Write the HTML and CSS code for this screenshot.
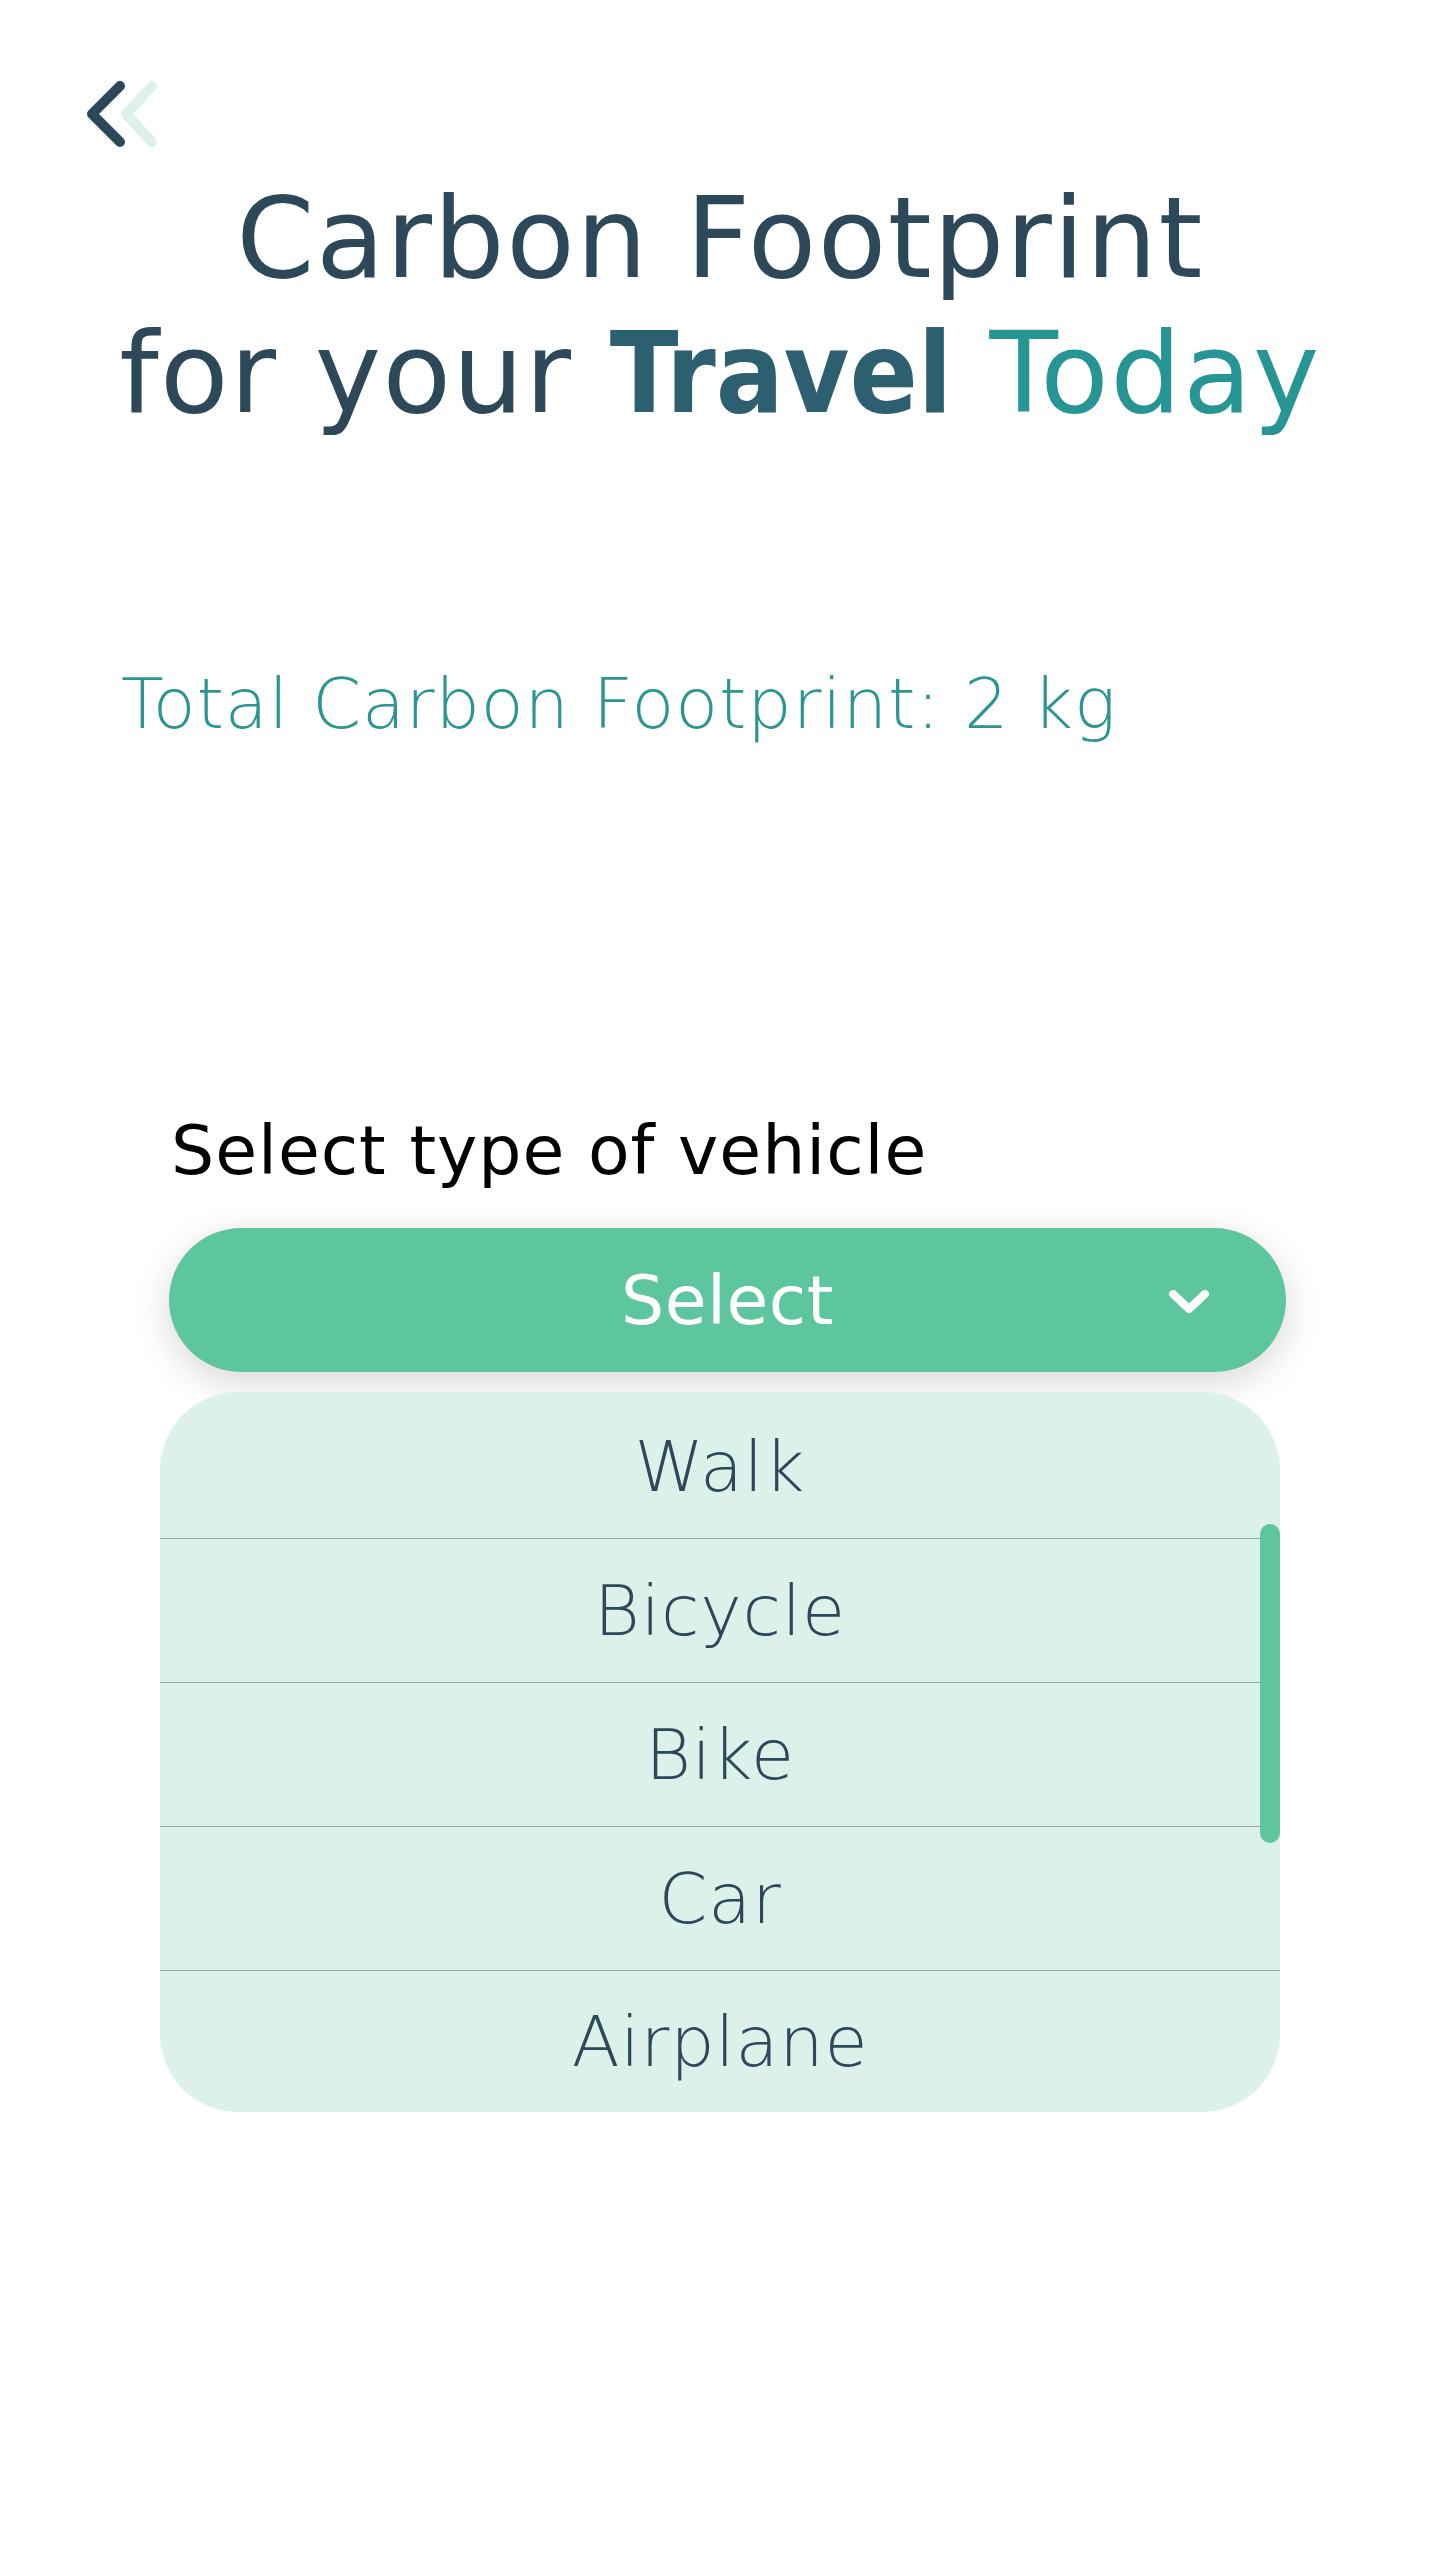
FILE: index.html
```html
<!DOCTYPE html>
<html lang="en">
<head>
<meta charset="utf-8">
<title>Carbon Footprint</title>
<link rel="stylesheet" href="styles.css">
</head>
<body>
<main class="page">
  <a class="back" href="#" aria-label="Back">
    <svg width="80" height="70" viewBox="0 0 80 70">
      <polyline points="72,8 46,36 72,64" fill="none" stroke="#dcf1ea" stroke-width="10" stroke-linecap="round" stroke-linejoin="round"/>
      <polyline points="40,8 12,36 40,64" fill="none" stroke="#2d4859" stroke-width="10" stroke-linecap="round" stroke-linejoin="round"/>
    </svg>
  </a>
  <h1 class="title">Carbon Footprint<br>for your <span class="travel">Travel</span> <span class="today">Today</span></h1>
  <p class="total">Total Carbon Footprint: 2 kg</p>
  <section class="field">
    <div class="label">Select type of vehicle</div>
    <button class="select" type="button">
      <span class="select-text">Select</span>
      <svg class="chev" width="44" height="28" viewBox="0 0 44 28">
        <polyline points="6,6 22,21 38,6" fill="none" stroke="#ffffff" stroke-width="8" stroke-linecap="round" stroke-linejoin="round"/>
      </svg>
    </button>
    <ul class="list">
      <li class="item">Walk</li>
      <li class="item">Bicycle</li>
      <li class="item">Bike</li>
      <li class="item">Car</li>
      <li class="item last">Airplane</li>
    </ul>
  </section>
</main>
</body>
</html>
```
FILE: styles.css
```css
html, body {
  margin: 0;
  padding: 0;
  background: #ffffff;
}
body {
  font-family: "DejaVu Sans", "Noto Sans", sans-serif;
  color: #2d4859;
  width: 1440px;
  min-height: 2560px;
}
.page {
  display: flex;
  flex-direction: column;
}
.back {
  display: block;
  width: 80px;
  height: 70px;
  margin: 78px 0 0 80px;
}
.back svg { display: block; }
.title {
  margin: 23px 0 0 0;
  font-size: 112px;
  line-height: 135px;
  font-weight: 400;
  text-align: center;
  color: #2d4859;
  letter-spacing: 1.5px;
}
.travel {
  font-family: "DejaVu Sans Condensed", "DejaVu Sans", sans-serif;
  font-stretch: condensed;
  font-weight: 700;
  color: #2c5f6f;
  letter-spacing: 0;
}
.today {
  color: #279594;
}
.total {
  margin: 221px 0 0 121px;
  font-size: 70px;
  line-height: 84px;
  color: #2a9592;
  font-weight: 300;
  letter-spacing: 0.9px;
}
.field {
  display: flex;
  flex-direction: column;
  align-items: flex-start;
  margin-top: 364px;
}
.label {
  margin-left: 171px;
  font-size: 68px;
  line-height: 82px;
  color: #000000;
  letter-spacing: 1px;
}
.select {
  margin: 36px 0 0 169px;
  width: 1117px;
  height: 144px;
  border: none;
  border-radius: 72px;
  background: #5ec69e;
  box-shadow: 0 10px 36px rgba(0, 0, 0, 0.16);
  position: relative;
  display: flex;
  align-items: center;
  justify-content: center;
  padding: 0;
  font-family: inherit;
  cursor: pointer;
}
.select-text {
  color: #ffffff;
  font-size: 68px;
  line-height: 1;
  margin-top: 2px;
  letter-spacing: 0.5px;
}
.chev {
  position: absolute;
  right: 75px;
  top: 60px;
}
.list {
  list-style: none;
  margin: 20px 0 0 160px;
  padding: 3px 0 0 0;
  width: 1120px;
  background: #dbf1e9;
  border-radius: 78px;
  position: relative;
  overflow: visible;
}
.list::before {
  content: "";
  position: absolute;
  left: 0;
  right: 0;
  top: 300px;
  height: 126px;
  box-shadow: 0 0 46px rgba(0, 0, 0, 0.18);
  z-index: -1;
}
.list::after {
  content: "";
  position: absolute;
  right: 0;
  top: 132px;
  width: 20px;
  height: 319px;
  border-radius: 10px;
  background: #5ec69e;
}
.item {
  box-sizing: border-box;
  height: 144px;
  border-bottom: 1px solid #93b1aa;
  display: flex;
  align-items: center;
  justify-content: center;
  font-size: 70px;
  color: #2d4859;
  font-weight: 300;
  letter-spacing: 0.8px;
}
.item.last {
  height: 141px;
  border-bottom: none;
}
```
